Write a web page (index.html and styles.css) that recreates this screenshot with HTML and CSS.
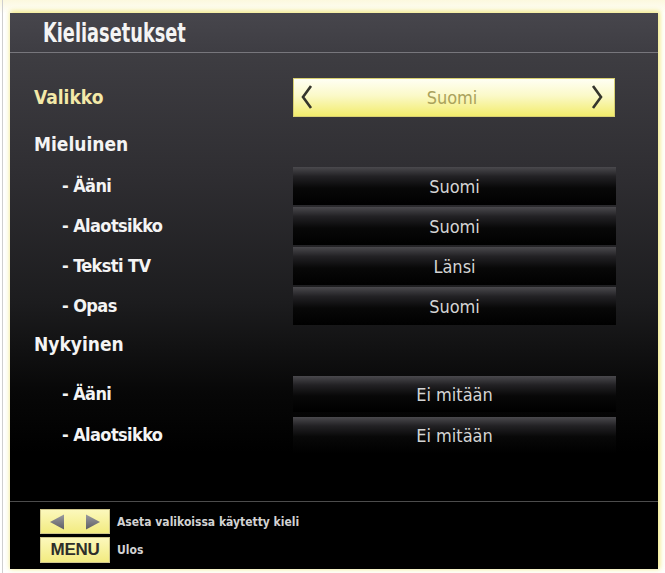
FILE: index.html
```html
<!DOCTYPE html>
<html lang="fi">
<head>
<meta charset="utf-8">
<title>Kieliasetukset</title>
<link rel="stylesheet" href="styles.css">
</head>
<body>
<div class="frame">
  <div class="panel">
    <div class="header"><span class="title">Kieliasetukset</span></div>
    <div class="content">
      <div class="row row-main">
        <span class="label label-active">Valikko</span>
        <div class="select">
          <svg class="chev" viewBox="0 0 14 26" width="14" height="26"><path d="M11 2 L3 13 L11 24" fill="none" stroke="#35352c" stroke-width="2.6" stroke-linejoin="miter"/></svg>
          <span class="select-text">Suomi</span>
          <svg class="chev" viewBox="0 0 14 26" width="14" height="26"><path d="M3 2 L11 13 L3 24" fill="none" stroke="#35352c" stroke-width="2.6" stroke-linejoin="miter"/></svg>
        </div>
      </div>
      <div class="heading heading-pref"><span class="label">Mieluinen</span></div>
      <div class="group group-pref">
        <div class="row row-sub"><span class="label sub">- Ääni</span><div class="value">Suomi</div></div>
        <div class="row row-sub"><span class="label sub">- Alaotsikko</span><div class="value">Suomi</div></div>
        <div class="row row-sub"><span class="label sub">- Teksti TV</span><div class="value">Länsi</div></div>
        <div class="row row-sub"><span class="label sub">- Opas</span><div class="value">Suomi</div></div>
      </div>
      <div class="heading heading-cur"><span class="label">Nykyinen</span></div>
      <div class="group group-cur">
        <div class="row row-cur"><span class="label sub">- Ääni</span><div class="value">Ei mitään</div></div>
        <div class="row row-cur"><span class="label sub">- Alaotsikko</span><div class="value">Ei mitään</div></div>
      </div>
    </div>
    <div class="footer">
      <div class="hint">
        <div class="key key-arrows">
          <svg viewBox="0 0 56 16" width="56" height="16">
            <defs>
              <linearGradient id="tri" x1="0" y1="0" x2="0" y2="1">
                <stop offset="0" stop-color="#9a9aa0"/>
                <stop offset="1" stop-color="#5e5e64"/>
              </linearGradient>
            </defs>
            <path d="M3 8 L17 0.5 L17 15.5 Z" fill="url(#tri)"/>
            <path d="M53 8 L39 0.5 L39 15.5 Z" fill="url(#tri)"/>
          </svg>
        </div>
        <span class="hint-text">Aseta valikoissa käytetty kieli</span>
      </div>
      <div class="hint">
        <div class="key key-menu">MENU</div>
        <span class="hint-text">Ulos</span>
      </div>
    </div>
  </div>
</div>
</body>
</html>
```
FILE: styles.css
```css
html, body {
  margin: 0;
  padding: 0;
  background: #ffffff;
}
body {
  width: 665px;
  height: 573px;
  overflow: hidden;
  background: linear-gradient(to bottom, #fcf8de 0px, #ffffff 14px);
}
.frame {
  margin-left: 2px;
  border-left: 1px solid #cfcfcf;
  padding: 13px 7px 4px 7px;
  height: 556px;
}
.panel {
  width: 648px;
  height: 556px;
  display: flex;
  flex-direction: column;
  background: #000;
  box-shadow: 1px -1px 5px 1px rgba(238, 226, 90, 0.75);
  font-family: "Liberation Sans Narrow", "DejaVu Sans Condensed", "Liberation Sans", sans-serif;
  font-weight: bold;
  color: #f2f2f2;
}
.header {
  height: 39px;
  border-bottom: 1px solid #77767c;
  background: linear-gradient(to bottom, #47464c, #3e3d43);
  display: flex;
  align-items: center;
  padding-left: 33px;
}
.title {
  display: inline-block;
  font-size: 26px;
  color: #f4f4f4;
  transform: scaleX(0.76);
  transform-origin: left center;
  white-space: nowrap;
}
.content {
  flex: 1;
  display: flex;
  flex-direction: column;
  padding-top: 24px;
  background: linear-gradient(to bottom, #3e3d42 0px, #2f2e32 120px, #1c1c1e 250px, #070707 340px, #000 400px);
}
.row {
  display: flex;
  align-items: center;
}
.label {
  width: 283px;
  flex: none;
  box-sizing: border-box;
  padding-left: 24px;
  font-size: 19px;
  color: #f4f4f4;
  line-height: 22px;
}
.label.sub {
  padding-left: 52px;
  font-size: 18px;
  letter-spacing: -0.6px;
}
.label-active {
  color: #f3e9a8;
}
.row-main {
  height: 40px;
}
.select {
  width: 322px;
  height: 39px;
  box-sizing: border-box;
  border: 1px solid #d8d070;
  background: linear-gradient(to bottom, #fffff4 0%, #fbf9c8 45%, #f2ec6c 100%);
  display: flex;
  align-items: center;
  justify-content: space-between;
  padding: 0 10px 0 6px;
}
.select-text {
  font-size: 18px;
  color: #aaa25c;
  font-weight: normal;
}
.chev {
  display: block;
}
.heading {
  display: flex;
}
.heading-pref {
  height: 50px;
  align-items: center;
  padding-top: 4px;
  box-sizing: border-box;
}
.heading-cur {
  height: 51px;
  padding-top: 8px;
  box-sizing: border-box;
}
.group {
  display: flex;
  flex-direction: column;
}
.group-pref {
  gap: 2px;
}
.group-cur {
  gap: 5px;
}
.row-sub {
  height: 38px;
}
.row-cur {
  height: 36px;
}
.value {
  width: 323px;
  height: 100%;
  display: flex;
  align-items: center;
  justify-content: center;
  font-size: 18px;
  font-weight: normal;
  color: #d4d4d4;
  background: linear-gradient(to bottom, #4a494d 0%, #222124 25%, #080808 55%, #000 100%);
}
.footer {
  height: 68px;
  border-top: 1px solid #4c4c4c;
  background: #000;
  padding: 7px 0 0 30px;
  display: flex;
  flex-direction: column;
  gap: 3px;
  box-sizing: border-box;
}
.hint {
  display: flex;
  align-items: center;
  gap: 7px;
}
.key {
  width: 70px;
  height: 25px;
  box-sizing: border-box;
  background: linear-gradient(to bottom, #fcf8bc, #f2eb80);
  border: 1px solid #cfc68a;
  display: flex;
  align-items: center;
  justify-content: center;
}
.key-menu {
  font-family: "Liberation Sans", sans-serif;
  font-size: 17px;
  font-weight: bold;
  color: #2e2e2a;
  height: 26px;
  letter-spacing: -0.3px;
}
.hint-text {
  font-family: "DejaVu Sans Condensed", "Liberation Sans Narrow", sans-serif;
  font-size: 12px;
  font-weight: bold;
  color: #d2d2d2;
}
```
